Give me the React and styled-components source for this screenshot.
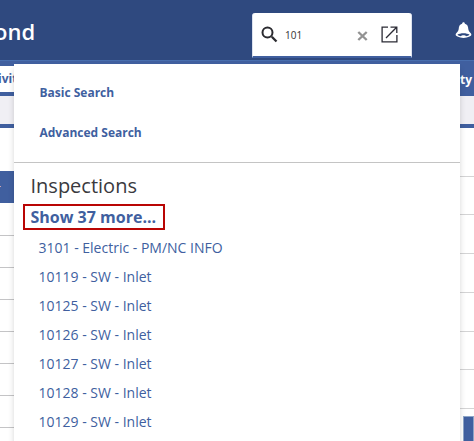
import React from "react";
import styled, { createGlobalStyle } from "styled-components";

const GlobalStyle = createGlobalStyle`
  * {
    box-sizing: border-box;
  }
  body {
    margin: 0;
    overflow: hidden;
    font-family: "Open Sans", "Noto Sans", sans-serif;
  }
`;

const inspections = [
  "3101 - Electric - PM/NC INFO",
  "10119 - SW - Inlet",
  "10125 - SW - Inlet",
  "10126 - SW - Inlet",
  "10127 - SW - Inlet",
  "10128 - SW - Inlet",
  "10129 - SW - Inlet",
];

const leftRows = [33, 32, 32, 32, 32, 32, 32];
const rightRows = [49, 38, 39, 39, 39, 38, 39];

const SearchIcon = () => (
  <svg width="17" height="17" viewBox="0 0 17 17" fill="none" stroke="#2b2b30">
    <circle cx="6.5" cy="6.5" r="5" strokeWidth="2" />
    <path d="M10.8 10.8L15.5 15.5" strokeWidth="2.3" />
  </svg>
);

const ClearIcon = () => (
  <svg width="11" height="10" viewBox="0 0 11 10" stroke="#939393">
    <path d="M1.3 1L9.7 9M9.7 1L1.3 9" strokeWidth="2.4" />
  </svg>
);

const OpenIcon = () => (
  <svg width="17" height="17" viewBox="0 0 17 17" fill="none" stroke="#2b2b35">
    <path d="M7 1.2H1.1V15.9H15.9V9" strokeWidth="1.3" />
    <path d="M5 12L15.4 1.5M9.5 1.2H15.8V7" strokeWidth="1.3" />
  </svg>
);

const BellIcon = () => (
  <svg width="17" height="17" viewBox="0 0 17 17">
    <path
      d="M8.5 0.3C9.4 0.3 9.8 1 9.9 1.7C12.3 2.4 13.2 4.2 13.3 7C13.4 9 14.8 10 16 11.5C17 13 15.8 14 14.5 14.6C11 16.4 6 16.4 2.5 14.6C1.2 14 0 13 1 11.5C2.2 10 3.6 9 3.7 7C3.8 4.2 4.7 2.4 7.1 1.7C7.2 1 7.6 0.3 8.5 0.3Z"
      fill="#fff"
    />
    <path
      d="M2.4 12.7C5.2 10.7 11.8 10.7 14.6 12.7C13.8 13.5 12.3 14 11 14.2C10.5 12.8 6.5 12.8 6 14.2C4.7 14 3.2 13.5 2.4 12.7Z"
      fill="#2f497f"
    />
  </svg>
);

const App = () => {
  return (
    <Page>
      <GlobalStyle />
      <Header>
        <Brand>ond</Brand>
        <SearchBox>
          <SearchIcon />
          <Query>101</Query>
          <ClearIcon />
          <OpenIcon />
        </SearchBox>
        <BellIcon />
      </Header>
      <Nav>
        <ActiveTab>ivit</ActiveTab>
        <Tab>ty</Tab>
      </Nav>
      <SubBar />
      <Content>
        <LeftColumn>
          <Filter>-</Filter>
          {leftRows.map((height, i) => (
            <Row key={i} $height={height} $color="#c4c4c6" />
          ))}
        </LeftColumn>
        <RightColumn>
          {rightRows.map((height, i) => (
            <Row key={i} $height={height} $color="#d4d4d5" />
          ))}
          <SideButton />
        </RightColumn>
      </Content>
      <Dropdown>
        <Options>
          <Option>Basic Search</Option>
          <Option>Advanced Search</Option>
        </Options>
        <Heading>Inspections</Heading>
        <ShowMore>Show 37 more...</ShowMore>
        <Results>
          {inspections.map((item) => (
            <Result key={item}>{item}</Result>
          ))}
        </Results>
      </Dropdown>
    </Page>
  );
};

const Page = styled.div`
  position: relative;
  width: 474px;
  height: 441px;
  overflow: hidden;
  display: flex;
  flex-direction: column;
  background: #fff;
`;

const Header = styled.header`
  height: 61px;
  flex-shrink: 0;
  padding-right: 2px;
  display: flex;
  align-items: flex-start;
  background: #2f497f;
  border-bottom: 1px solid #486eae;

  > svg {
    margin: 22px 0 0 43px;
  }
`;

const Brand = styled.div`
  margin: 15px auto 0 -6px;
  font-size: 22px;
  font-weight: 600;
  line-height: 32px;
  color: #fff;
`;

const SearchBox = styled.div`
  width: 160px;
  height: 45px;
  margin-top: 13px;
  padding: 0 13px 0 8px;
  display: flex;
  align-items: center;
  background: #fff;
  border: solid #dce2ef;
  border-width: 0 1px;
  border-bottom: 2px solid #405f9f;
  border-radius: 3px 3px 0 0;
`;

const Query = styled.span`
  flex: 1;
  margin-left: 7px;
  font-size: 10px;
  line-height: 14px;
  color: #333;

  + svg {
    margin: 2px 13px 0 0;
  }
`;

const Nav = styled.nav`
  height: 35px;
  flex-shrink: 0;
  padding-top: 5px;
  display: flex;
  justify-content: space-between;
  background: #405f9f;
`;

const ActiveTab = styled.div`
  width: 30px;
  height: 26px;
  font-size: 12px;
  font-weight: 700;
  line-height: 25px;
  text-indent: -2px;
  color: #405f9f;
  background: #fff;
`;

const Tab = styled.div`
  width: 14px;
  font-size: 12px;
  font-weight: 700;
  line-height: 28px;
  color: #fff;
`;

const SubBar = styled.div`
  height: 32px;
  flex-shrink: 0;
  background: #f0eff4;
  border-bottom: 4px solid #405f9f;
`;

const Content = styled.main`
  flex: 1;
  display: flex;
  justify-content: space-between;
`;

const LeftColumn = styled.div`
  width: 30px;
  padding-top: 43px;
`;

const Filter = styled.div`
  height: 32px;
  font-size: 12px;
  line-height: 30px;
  text-indent: -3px;
  color: #fff;
  background: #405f9f;
`;

const RightColumn = styled.div`
  width: 20px;
`;

const Row = styled.div`
  height: ${(props) => props.$height}px;
  border-bottom: 1px solid ${(props) => props.$color};
`;

const SideButton = styled.div`
  height: 40px;
  margin: 7px 0 0 9px;
  background: #405f9f;
  border: 1px solid #8da5c8;
`;

const Dropdown = styled.section`
  position: absolute;
  top: 64px;
  left: 14px;
  width: 446px;
  height: 400px;
  background: #fff;
  box-shadow: 0 5px 6px rgba(0, 0, 0, 0.16);
`;

const Options = styled.div`
  height: 99px;
  padding: 9px 0 0 25.5px;
  border-bottom: 1px solid #c4c4c4;
`;

const Option = styled.div`
  height: 40px;
  font-size: 12px;
  font-weight: 700;
  line-height: 40px;
  color: #405f9f;
`;

const Heading = styled.h2`
  margin: 9px 0 0 16.5px;
  font-size: 20px;
  font-weight: 400;
  line-height: 28px;
  color: #3a3a3e;
`;

const ShowMore = styled.div`
  width: 142px;
  height: 26px;
  margin: 4px 0 0 9px;
  padding-left: 5.5px;
  font-size: 16px;
  font-weight: 700;
  line-height: 22px;
  white-space: nowrap;
  color: #405f9f;
  border: 2px solid #b90504;
`;

const Results = styled.ul`
  margin: 3px 0 0;
  padding: 0 0 0 24.5px;
  list-style: none;
`;

const Result = styled.li`
  height: 29px;
  font-size: 14px;
  line-height: 29px;
  color: #405f9f;
`;

export default App;
